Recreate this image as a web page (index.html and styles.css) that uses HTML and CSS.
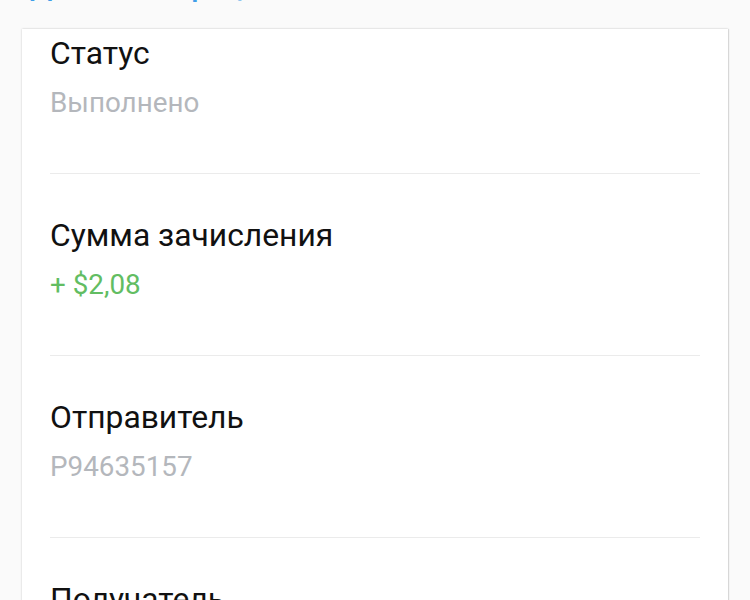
FILE: index.html
```html
<!DOCTYPE html>
<html lang="ru">
<head>
<meta charset="utf-8">
<link rel="stylesheet" href="styles.css">
</head>
<body>
<div class="page">
  <div class="header"><h1 class="page-title">Детали операции</h1></div>
  <div class="card">
    <div class="row">
      <div class="label">Статус</div>
      <div class="value">Выполнено</div>
    </div>
    <div class="row">
      <div class="label">Сумма зачисления</div>
      <div class="value green">+ $2,08</div>
    </div>
    <div class="row">
      <div class="label">Отправитель</div>
      <div class="value">P94635157</div>
    </div>
    <div class="row">
      <div class="label">Получатель</div>
      <div class="value">U00000000</div>
    </div>
  </div>
</div>
</body>
</html>
```
FILE: styles.css
```css
html, body {
  margin: 0;
  padding: 0;
  background: #fafafa;
  font-family: Roboto, "Noto Sans", sans-serif;
  overflow: hidden;
  height: 600px;
}
.page {
  display: flex;
  flex-direction: column;
}
.header {
  height: 29px;
  overflow: hidden;
}
.page-title {
  margin: -34px 0 0 30px;
  font-size: 30px;
  line-height: 40px;
  font-weight: 500;
  color: #3f9ee8;
}
.card {
  margin: 0 22px 0 22px;
  background: #fff;
  box-shadow: 0 0 2px rgba(0,0,0,0.2), 1px 0 1px rgba(0,0,0,0.08);
  padding: 0 28px;
}
.row {
  padding: 41px 0 50px;
  border-bottom: 1px solid #ebebeb;
}
.row:first-child {
  padding-top: 4px;
}
.label {
  font-size: 31.8px;
  line-height: 40px;
  color: #111;
}
.value {
  margin-top: 10px;
  font-size: 27.8px;
  line-height: 40px;
  color: #b4b7bc;
}
.value.green {
  color: #62bd62;
}
```
